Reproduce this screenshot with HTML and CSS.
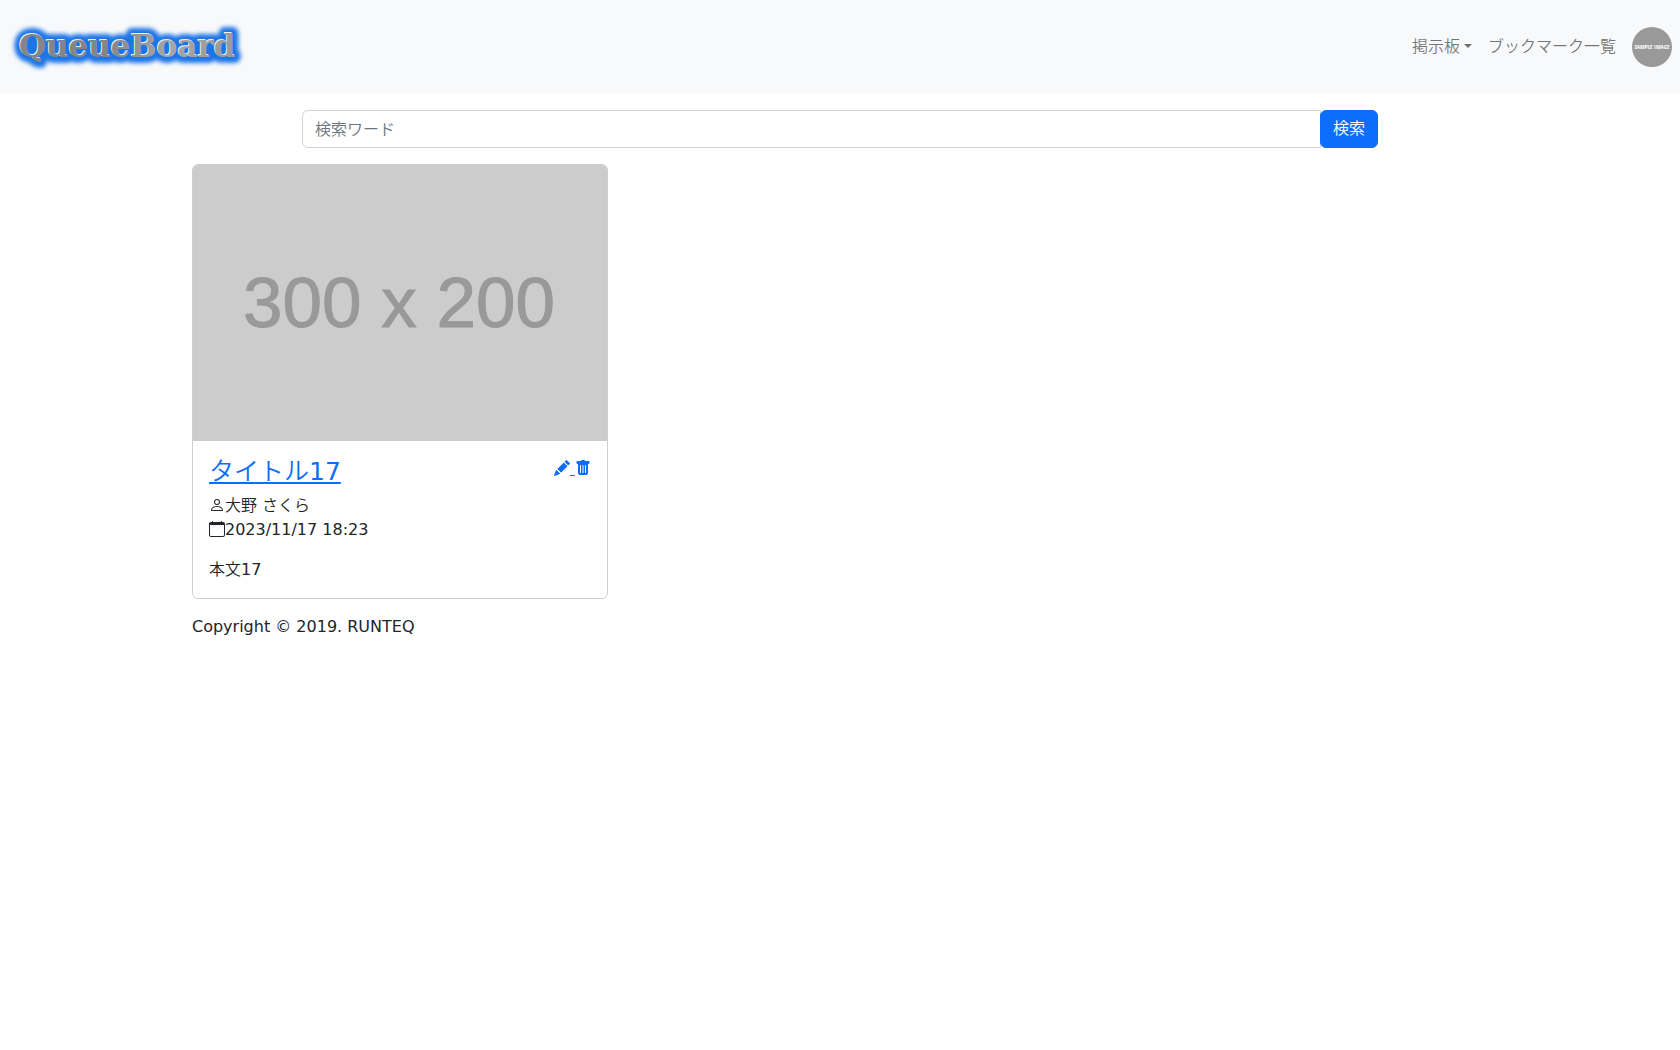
FILE: index.html
```html
<!DOCTYPE html>
<html lang="ja">
<head>
<meta charset="utf-8">
<meta name="viewport" content="width=device-width, initial-scale=1">
<title>QueueBoard</title>
<link rel="stylesheet" href="styles.css">
</head>
<body>
<header class="navbar">
  <a class="brand" href="#" aria-label="QueueBoard">
    <svg class="logo" width="250" height="70" viewBox="0 0 250 70">
      <defs>
        <linearGradient id="metal" x1="0" y1="0" x2="1" y2="0">
          <stop offset="0" stop-color="#858585"/>
          <stop offset=".4" stop-color="#858585"/>
          <stop offset=".7" stop-color="#a6a6a6"/>
          <stop offset="1" stop-color="#999"/>
        </linearGradient>
        <filter id="glow" x="-10%" y="-40%" width="120%" height="180%">
          <feGaussianBlur stdDeviation="2"/>
        </filter>
      </defs>
      <g class="logo-text">
        <text class="logo-glow" x="19" y="45" filter="url(#glow)">QueueBoard</text>
        <text class="logo-light" x="18" y="44">QueueBoard</text>
        <text x="19" y="45" fill="url(#metal)">QueueBoard</text>
      </g>
    </svg>
  </a>
  <nav class="nav">
    <a class="nav-link dropdown" href="#">掲示板</a>
    <a class="nav-link" href="#">ブックマーク一覧</a>
    <a class="avatar-link" href="#" aria-label="プロフィール">
      <svg class="avatar" width="40" height="40" viewBox="0 0 40 40">
        <circle cx="20" cy="20" r="20" fill="#999"/>
        <text class="avatar-text" x="20" y="22" text-anchor="middle">SAMPLE IMAGE</text>
      </svg>
    </a>
  </nav>
</header>
<main class="container">
  <form class="search">
    <input class="search-input" type="search" placeholder="検索ワード" aria-label="検索ワード">
    <button class="search-button" type="submit">検索</button>
  </form>
  <div class="boards">
    <article class="card">
      <svg class="card-image" viewBox="0 0 414 276" role="img" aria-label="300 x 200">
        <rect width="414" height="276" fill="#ccc"/>
        <text class="card-image-text" x="206" y="162" text-anchor="middle">300 x 200</text>
      </svg>
      <div class="card-body">
        <div class="card-head">
          <h4 class="card-title"><a href="#">タイトル17</a></h4>
          <div class="card-actions">
            <a href="#" aria-label="編集"><svg class="icon" viewBox="0 0 16 16"><path d="M12.854.146a.5.5 0 0 0-.707 0L10.5 1.793 14.207 5.5l1.647-1.646a.5.5 0 0 0 0-.708zm.646 6.061L9.793 2.5 3.293 9H3.5a.5.5 0 0 1 .5.5v.5h.5a.5.5 0 0 1 .5.5v.5h.5a.5.5 0 0 1 .5.5v.5h.5a.5.5 0 0 1 .5.5v.207zm-7.468 7.468A.5.5 0 0 1 6 13.5V13h-.5a.5.5 0 0 1-.5-.5V12h-.5a.5.5 0 0 1-.5-.5V11h-.5a.5.5 0 0 1-.5-.5V10h-.5a.5.5 0 0 1-.175-.032l-.179.178a.5.5 0 0 0-.11.168l-2 5a.5.5 0 0 0 .65.65l5-2a.5.5 0 0 0 .168-.11z"/></svg> </a><a href="#" aria-label="削除"><svg class="icon" viewBox="0 0 16 16"><path d="M2.5 1a1 1 0 0 0-1 1v1a1 1 0 0 0 1 1H3v9a2 2 0 0 0 2 2h6a2 2 0 0 0 2-2V4h.5a1 1 0 0 0 1-1V2a1 1 0 0 0-1-1H10a1 1 0 0 0-1-1H7a1 1 0 0 0-1 1zm3 4a.5.5 0 0 1 .5.5v7a.5.5 0 0 1-1 0v-7a.5.5 0 0 1 .5-.5M8 5a.5.5 0 0 1 .5.5v7a.5.5 0 0 1-1 0v-7A.5.5 0 0 1 8 5m3 .5v7a.5.5 0 0 1-1 0v-7a.5.5 0 0 1 1 0"/></svg></a>
          </div>
        </div>
        <ul class="meta">
          <li><svg class="icon" viewBox="0 0 16 16"><path d="M8 8a3 3 0 1 0 0-6 3 3 0 0 0 0 6m2-3a2 2 0 1 1-4 0 2 2 0 0 1 4 0m4 8c0 1-1 1-1 1H3s-1 0-1-1 1-4 6-4 6 3 6 4m-1-.004c-.001-.246-.154-.986-.832-1.664C11.516 10.68 10.289 10 8 10s-3.516.68-4.168 1.332c-.678.678-.83 1.418-.832 1.664z"/></svg>大野 さくら</li>
          <li><svg class="icon" viewBox="0 0 16 16"><path d="M3.5 0a.5.5 0 0 1 .5.5V1h8V.5a.5.5 0 0 1 1 0V1h1a2 2 0 0 1 2 2v11a2 2 0 0 1-2 2H2a2 2 0 0 1-2-2V3a2 2 0 0 1 2-2h1V.5a.5.5 0 0 1 .5-.5M1 4v10a1 1 0 0 0 1 1h12a1 1 0 0 0 1-1V4z"/></svg>2023/11/17 18:23</li>
        </ul>
        <p class="card-text">本文17</p>
      </div>
    </article>
  </div>
</main>
<footer class="container">
  <p class="copyright">Copyright © 2019. RUNTEQ</p>
</footer>
</body>
</html>
```
FILE: styles.css
```css
* {
  box-sizing: border-box;
}

body {
  margin: 0;
  font-family: "DejaVu Sans", "Noto Sans CJK JP DemiLight", "Noto Sans CJK JP", sans-serif;
  font-size: 16px;
  line-height: 24px;
  color: #212529;
  background: #fff;
}

a {
  color: #0d6efd;
}

.navbar {
  display: flex;
  align-items: center;
  justify-content: space-between;
  min-height: 94px;
  padding: 12px 8px 12px 0;
  background: #f8f9fa;
}

.brand,
.logo,
.avatar-link,
.avatar {
  display: block;
}

.logo-text {
  font-family: "DejaVu Serif", serif;
  font-size: 31px;
  font-weight: bold;
}

.logo-glow {
  fill: #1f74e6;
  stroke: #1f74e6;
  stroke-width: 12px;
  stroke-linejoin: round;
}

.logo-light {
  fill: #e8f1fc;
}

.nav {
  display: flex;
  align-items: center;
}

.nav-link {
  padding: 8px;
  color: rgba(0, 0, 0, .55);
  text-decoration: none;
}

.dropdown::after {
  content: "";
  display: inline-block;
  margin-left: 4px;
  vertical-align: 4px;
  border-top: 4px solid;
  border-right: 4px solid transparent;
  border-left: 4px solid transparent;
}

.avatar-link {
  margin-left: 8px;
}

.avatar-text {
  font-family: "Open Sans Condensed", "Liberation Sans", sans-serif;
  font-size: 6px;
  font-weight: bold;
  fill: #fff;
}

.container {
  max-width: 1320px;
  margin: 0 auto;
  padding: 0 12px;
}

.search {
  display: flex;
  margin: 16px 110px;
}

.search-input {
  flex: 1;
  min-width: 0;
  height: 38px;
  padding: 6px 12px;
  border: 1px solid #ced4da;
  border-radius: 6px 0 0 6px;
  font: inherit;
  color: #212529;
  appearance: none;
}

.search-input::placeholder {
  color: #6c757d;
  opacity: 1;
}

.search-button {
  height: 38px;
  margin-left: -1px;
  padding: 6px 12px;
  border: 1px solid #0d6efd;
  border-radius: 6px;
  font: inherit;
  color: #fff;
  background: #0d6efd;
}

.boards {
  display: grid;
  grid-template-columns: repeat(3, 1fr);
  gap: 24px;
}

.card {
  border: 1px solid #cfcfcf;
  border-radius: 6px;
  overflow: hidden;
}

.card-image {
  display: block;
  width: 100%;
}

.card-image-text {
  font-family: "Liberation Sans", sans-serif;
  font-size: 71px;
  fill: #999;
  stroke: #999;
  stroke-width: 1px;
}

.card-body {
  padding: 16px;
}

.card-head {
  display: flex;
  justify-content: space-between;
  margin-bottom: 8px;
}

.card-title {
  margin: 0;
  font-size: 25px;
  font-weight: normal;
  line-height: 29px;
}

.card-actions {
  height: 24px;
}

.icon {
  width: 16px;
  height: 16px;
  vertical-align: -2px;
  fill: currentColor;
}

.meta {
  margin: 0 0 16px;
  padding: 0;
  list-style: none;
}

.card-text {
  margin: 0;
}

.copyright {
  margin: 16px 0;
}
```
